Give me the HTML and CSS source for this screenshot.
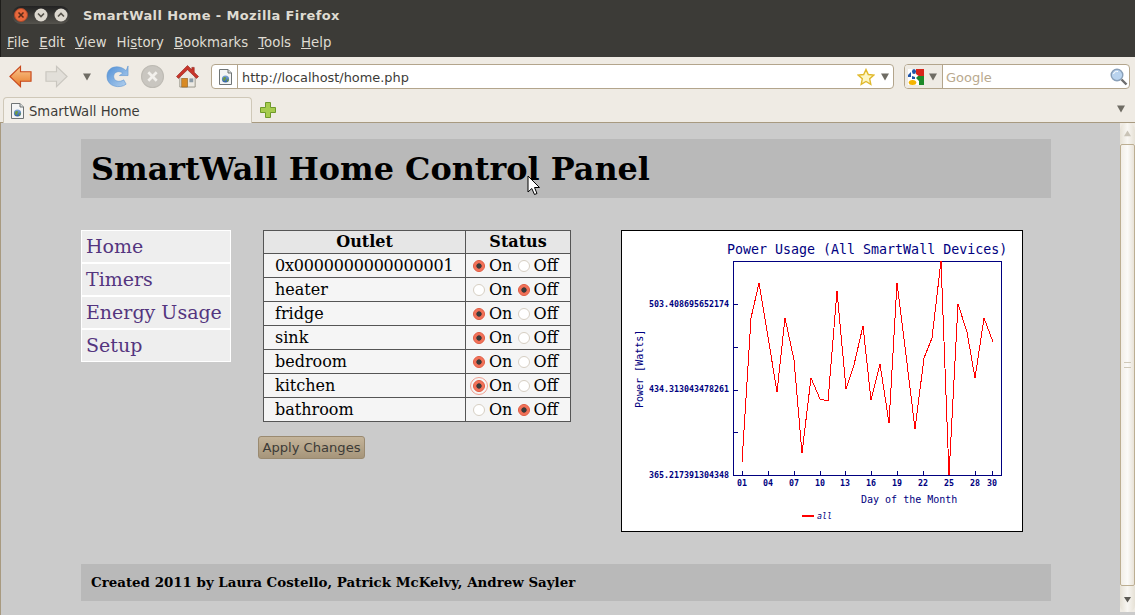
FILE: index.html
```html
<!DOCTYPE html>
<html lang="en">
<head>
<meta charset="utf-8">
<title>SmartWall Home</title>
<link rel="stylesheet" href="styles.css">
</head>
<body>
<svg width="0" height="0" class="defs">
  <defs>
    <linearGradient id="globe" x1="0" y1="0" x2="0" y2="1"><stop offset="0" stop-color="#7fa8d8"/><stop offset="1" stop-color="#2f5f9c"/></linearGradient>
    <symbol id="page" viewBox="0 0 14 16">
      <path d="M1.5.5H10L13.5 4V15.5H1.5Z" fill="#f4f5f5" stroke="#6f7475"/>
      <path d="M10 .5V4H13.5" fill="#d8dcdc" stroke="#6f7475"/>
      <circle cx="7.5" cy="10" r="3.6" fill="url(#globe)"/>
      <path d="M5.2 9C6 7.600 8 8 8 9S6.500 10.500 7 12C5.500 12 4.700 10.500 5.200 9ZM9 11L10.800 10C10.800 11.300 10 12.700 9 12.700Z" fill="#6f9a3c"/>
    </symbol>
    <symbol id="tri" viewBox="0 0 8 8"><path d="M0 .5H8L4 7.5Z" fill="#6f6c64"/></symbol>
  </defs>
</svg>

<div class="titlebar">
  <div class="winbtns">
    <svg class="winbtn" viewBox="0 0 14 14"><circle cx="7" cy="7" r="6.5" fill="#e8683c" stroke="#a8482a"/><path d="M4.5 4.5L9.5 9.5M9.5 4.5L4.5 9.5" stroke="#5a2a18" stroke-width="1.5"/></svg>
    <svg class="winbtn" viewBox="0 0 14 14"><circle cx="7" cy="7" r="6.5" fill="#dcd8cf"/><path d="M4 5.5L7 8.5L10 5.5" fill="none" stroke="#55524a" stroke-width="1.6"/></svg>
    <svg class="winbtn" viewBox="0 0 14 14"><circle cx="7" cy="7" r="6.5" fill="#dcd8cf"/><path d="M4 8.5L7 5.5L10 8.5" fill="none" stroke="#55524a" stroke-width="1.6"/></svg>
  </div>
  <span class="wintitle">SmartWall Home - Mozilla Firefox</span>
</div>

<div class="menubar">
  <span class="mi"><u>F</u>ile</span>
  <span class="mi"><u>E</u>dit</span>
  <span class="mi"><u>V</u>iew</span>
  <span class="mi">Hi<u>s</u>tory</span>
  <span class="mi"><u>B</u>ookmarks</span>
  <span class="mi"><u>T</u>ools</span>
  <span class="mi"><u>H</u>elp</span>
</div>

<div class="toolbar">
  <svg class="tb tb-back" viewBox="0 0 24 24"><defs><linearGradient id="org" x1="0" y1="0" x2="0" y2="1"><stop offset="0" stop-color="#f9c890"/><stop offset="1" stop-color="#e87a28"/></linearGradient></defs><path d="M1 12L12 1.5V7H23V17H12V22.5Z" fill="url(#org)" stroke="#c8481c" stroke-width="1.2"/></svg>
  <svg class="tb tb-fwd" viewBox="0 0 24 24"><path d="M23 12L12 1.5V7H1V17H12V22.5Z" fill="#e2dfd9" stroke="#c9c6bf" stroke-width="1.2"/></svg>
  <svg class="tri tb-tri"><use href="#tri"/></svg>
  <svg class="tb tb-reload" viewBox="0 0 24 24"><defs><linearGradient id="blu" x1="0" y1="0" x2="1" y2="1"><stop offset="0" stop-color="#4f8fd6"/><stop offset="1" stop-color="#b6d2ee"/></linearGradient></defs><path d="M21 6L23 1V11H14L17.5 8.5C14 5.5 8 7 8 12S14 18.5 18.5 15.5L21 20C15 25 1 23 1 12S14 -1 21 6Z" fill="url(#blu)" stroke="#5a92d0" stroke-width=".6"/></svg>
  <svg class="tb tb-stop" viewBox="0 0 22 22"><circle cx="11" cy="11" r="10.5" fill="#c9c6c0" stroke="#bdbab3"/><path d="M7 7L15 15M15 7L7 15" stroke="#f2f0ec" stroke-width="2.6"/></svg>
  <svg class="tb tb-home" viewBox="0 0 24 24"><path d="M4 11V23H20V11L12 4Z" fill="#ece9e2" stroke="#9a958a"/><path d="M12 .5L.5 12L2.5 14L12 5L21.5 14L23.5 12L19 7.5V2.5H16.5V5Z" fill="#c8352a" stroke="#8f2018" stroke-width=".6"/><rect x="6" y="14" width="6" height="9" fill="#d88a24" stroke="#8a5a18" stroke-width=".6"/><rect x="14" y="14" width="4" height="4" fill="#8a9aa6"/></svg>

  <div class="urlbar">
    <svg class="fav"><use href="#page"/></svg>
    <span class="sep"></span>
    <span class="url">http://localhost/home.php</span>
    <svg class="star" viewBox="0 0 18 18"><path d="M9 1.5L11.3 6.5L16.8 7.1L12.7 10.8L13.8 16.3L9 13.5L4.2 16.3L5.3 10.8L1.2 7.1L6.7 6.5Z" fill="#fdf6c4" stroke="#e0b92c" stroke-width="1.4"/></svg>
    <svg class="tri url-tri"><use href="#tri"/></svg>
  </div>

  <div class="searchbar">
    <div class="engine">
      <svg class="glogo" viewBox="0 0 16 16"><rect width="16" height="16" fill="#fff"/><path d="M8 0H16V8H12L8 5Z" fill="#d8261c"/><path d="M10 7H16V16H11V12L8 9Z" fill="#1d8a2a"/><ellipse cx="4.5" cy="13.5" rx="3.8" ry="2.5" fill="#f4b400"/><path d="M0 6L3 3V8H0Z" fill="#1f55a8"/><ellipse cx="6" cy="2.5" rx="2" ry="2.5" fill="#1f55a8"/><path d="M4 7L7 8V10H4Z" fill="#1f55a8"/></svg>
      <svg class="tri"><use href="#tri"/></svg>
    </div>
    <span class="sep sep-search"></span>
    <span class="google">Google</span>
    <svg class="mag" viewBox="0 0 18 18"><circle cx="7" cy="7" r="5.8" fill="#b9d3ee" stroke="#8aa0b8" stroke-width="1.4"/><path d="M3.5 6C4 4 6 3 8 3.5" fill="none" stroke="#fff"/><path d="M11.5 11.5L16.5 16.5" stroke="#6d6d6d" stroke-width="2.4"/></svg>
  </div>
</div>

<div class="tabbar">
  <div class="tab">
    <svg class="fav"><use href="#page"/></svg>
    <span>SmartWall Home</span>
  </div>
  <svg class="plus" viewBox="0 0 16 16"><path d="M5.5 .5H10.5V5.5H15.5V10.5H10.5V15.5H5.5V10.5H.5V5.5H5.5Z" fill="#a6cc4e" stroke="#6f9a2a"/></svg>
  <svg class="tri tab-tri"><use href="#tri"/></svg>
</div>

<div class="viewport">
  <main class="page">
    <header class="banner"><h1>SmartWall Home Control Panel</h1></header>

    <div class="columns">
      <nav class="nav">
        <a class="nav-link">Home</a>
        <a class="nav-link">Timers</a>
        <a class="nav-link">Energy Usage</a>
        <a class="nav-link">Setup</a>
      </nav>

      <form class="panel">
        <table class="outlets">
          <thead><tr><th class="c-name">Outlet</th><th class="c-stat">Status</th></tr></thead>
          <tbody>
            <tr><td class="name addr">0x0000000000000001</td><td class="stat"><input type="radio" name="a" checked>On <input type="radio" name="a">Off</td></tr>
            <tr><td class="name">heater</td><td class="stat"><input type="radio" name="b">On <input type="radio" name="b" checked>Off</td></tr>
            <tr><td class="name">fridge</td><td class="stat"><input type="radio" name="c" checked>On <input type="radio" name="c">Off</td></tr>
            <tr><td class="name">sink</td><td class="stat"><input type="radio" name="d" checked>On <input type="radio" name="d">Off</td></tr>
            <tr><td class="name">bedroom</td><td class="stat"><input type="radio" name="e" checked>On <input type="radio" name="e">Off</td></tr>
            <tr><td class="name">kitchen</td><td class="stat"><input class="focused" type="radio" name="f" checked>On <input type="radio" name="f">Off</td></tr>
            <tr><td class="name">bathroom</td><td class="stat"><input type="radio" name="g">On <input type="radio" name="g" checked>Off</td></tr>
          </tbody>
        </table>
        <button type="button" class="apply">Apply Changes</button>
      </form>

      <figure class="chart">
        <svg class="chart-svg" width="402" height="302" viewBox="621 230 402 302">
          <rect x="621.5" y="230.5" width="401" height="301" fill="#fff" stroke="#000"/>
          <text class="c-title" x="727" y="254">Power Usage (All SmartWall Devices)</text>
          <g class="axis">
            <rect x="733.5" y="261.5" width="268" height="214" fill="none"/>
            <path d="M733 304H738M733 347H738M733 390H738M733 432H738M733 475H738M742 475V471M768 475V471M794 475V471M820 475V471M845 475V471M871 475V471M897 475V471M923 475V471M949 475V471M975 475V471M992 475V471"/>
          </g>
          <g class="c-small">
            <text x="649" y="307">503.408695652174</text>
            <text x="649" y="392">434.313043478261</text>
            <text x="649" y="478">365.217391304348</text>
            <text x="737" y="486">01</text><text x="763" y="486">04</text><text x="789" y="486">07</text><text x="815" y="486">10</text><text x="840" y="486">13</text><text x="866" y="486">16</text><text x="892" y="486">19</text><text x="918" y="486">22</text><text x="944" y="486">25</text><text x="970" y="486">28</text><text x="987" y="486">30</text>
          </g>
          <text class="c-label" x="861" y="503">Day of the Month</text>
          <text class="c-label" transform="translate(643 408) rotate(-90)">Power [Watts]</text>
          <polyline class="series" points="742,462 751,318 759,283 768,337 777,392 785,318 794,360 802,453 811,378 820,399 828,401 837,291 846,389 854,365 863,326 871,400 880,364 889,423 897,283 906,355 915,429 924,358 932,338 941,261 949,475 958,304 967,332 975,378 984,318 993,342"/>
          <path class="legend-line" d="M802 516H814"/>
          <text class="c-legend" x="817" y="519">all</text>
        </svg>
      </figure>
    </div>

    <footer class="footer">Created 2011 by Laura Costello, Patrick McKelvy, Andrew Sayler</footer>
  </main>

  <div class="scrollbar">
    <div class="sb-btn sb-top"><svg class="sb-tri" viewBox="0 0 8 8"><path d="M0 7H8L4 .5Z" fill="#c9c3b6"/></svg></div>
    <div class="sb-thumb"><span class="grip"></span></div>
    <div class="sb-btn sb-bot"><svg class="sb-tri" viewBox="0 0 8 8"><path d="M0 1H8L4 7.5Z" fill="#5c5a54"/></svg></div>
  </div>

  <svg class="cursor" width="14" height="21" viewBox="0 0 14 21"><path d="M1 1V17L4.8 13.5L7.5 19.5L10 18.5L7.5 12.5H12.5Z" fill="#fff" stroke="#000"/></svg>
</div>
</body>
</html>
```
FILE: styles.css
```css
* { box-sizing: border-box; }
html, body { margin: 0; height: 615px; overflow: hidden; }
body { display: flex; flex-direction: column; width: 1135px; background: #efebe4; font-family: "DejaVu Sans", sans-serif; }
.defs { position: absolute; }

.titlebar { height: 28px; background: #3c3b37; display: flex; align-items: center; padding-left: 11px; flex: none; border-left: 1px solid #1e1d1a; }
.winbtns { width: 58px; height: 18px; margin-top: 2px; border-radius: 9px; background: linear-gradient(#222, #55534d); display: flex; align-items: center; justify-content: space-between; padding: 0 2px; }
.winbtn { width: 14px; height: 14px; }
.wintitle { margin-left: 13px; margin-top: 2px; color: #dfdbd2; font-weight: bold; font-size: 13px; letter-spacing: .38px; white-space: nowrap; }

.menubar { height: 29px; padding-bottom: 1px; background: #3c3b37; color: #dfdbd2; display: flex; align-items: center; font-size: 13.3px; padding-left: 6px; gap: 10px; flex: none; border-left: 1px solid #1e1d1a; }
.mi { white-space: nowrap; }

.toolbar { height: 39px; background: #efebe4; display: flex; align-items: center; padding-left: 9px; flex: none; }
.tb { height: 23px; width: 23px; flex: none; }
.tb-fwd { margin-left: 13px; }
.tri { width: 8px; height: 8px; flex: none; }
.tb-tri { margin-left: 15px; }
.tb-reload { margin-left: 15px; }
.tb-stop { margin-left: 12px; }
.tb-home { margin-left: 12px; }

.urlbar, .searchbar { height: 25px; background: #fff; border: 1px solid #b3a58c; border-radius: 4px; display: flex; align-items: center; flex: none; }
.urlbar { width: 683px; margin-left: 12px; padding-left: 6px; }
.searchbar { width: 226px; margin-left: 10px; overflow: hidden; }
.fav { width: 14px; height: 16px; flex: none; }
.sep { width: 1px; height: 23px; background: #b3a58c; margin-left: 5px; flex: none; }
.sep-search { margin-left: 0; }
.url { margin: 1px 0 0 4px; font-size: 12.9px; color: #3c3b37; }
.star { width: 18px; height: 18px; margin-left: auto; }
.url-tri { margin: 0 4px 0 6px; }
.engine { width: 37px; height: 23px; background: #efebe4; display: flex; align-items: center; padding-left: 3px; gap: 5px; }
.glogo { width: 16px; height: 16px; flex: none; }
.google { margin: 1px 0 0 3px; font-size: 13px; color: #b9a98e; }
.mag { width: 18px; height: 18px; margin-left: auto; margin-right: 1px; }

.tabbar { height: 27px; background: #efebe4; border-bottom: 1px solid #a89a80; display: flex; align-items: flex-end; padding-left: 3px; flex: none; }
.tab { width: 249px; height: 26px; margin-bottom: -1px; padding-top: 1px; background: #f3f0ea; border: 1px solid #cfc8b8; border-bottom: none; border-radius: 4px 4px 0 0; display: flex; align-items: center; padding-left: 6px; gap: 5px; font-size: 13.2px; color: #3c3b37; }
.plus { width: 16px; height: 16px; margin: 0 0 4px 8px; flex: none; }
.tab-tri { margin: 0 10px 9px auto; }

.viewport { flex: 1; display: flex; position: relative; background: #cbcbcb; min-height: 0; }
.page { flex: 1; padding: 16px 0 0 80px; font-family: "DejaVu Serif", serif; min-width: 0; border-left: 1px solid #a89a80; }

.banner { width: 970px; height: 59px; background: #b9b9b9; display: flex; align-items: center; padding-left: 10px; }
h1 { margin: 0; font-size: 31.85px; font-weight: bold; color: #000; white-space: nowrap; }

.columns { display: flex; margin-top: 32px; align-items: flex-start; }
.nav { width: 150px; display: flex; flex-direction: column; gap: 2px; background: #fff; border: 1px solid #fff; flex: none; }
.nav-link { display: block; height: 31px; line-height: 30px; padding-left: 4px; background: #eee; color: #54357f; font-size: 19px; white-space: nowrap; }

.panel { margin-left: 27px; width: 340px; flex: none; }
.outlets { border-collapse: collapse; margin-left: 5px; font-size: 16px; color: #000; }
.outlets th, .outlets td { border: 1px solid #555; padding: 0; height: 24px; line-height: 20px; }
.outlets th { background: #e6e6e6; font-weight: bold; text-align: center; font-size: 16px; height: 23px; }
.c-name { width: 202px; }
.c-stat { width: 105px; }
.outlets td { background: #f5f5f5; }
.name { padding-left: 11px !important; }
.addr { letter-spacing: -.2px; }
.stat { padding-left: 7px !important; white-space: nowrap; }

input[type=radio] { appearance: none; -webkit-appearance: none; width: 12px; height: 12px; margin: 0 4px 0 0; border-radius: 50%; border: 1px solid #d6cfc3; background: #fff; vertical-align: -1px; }
input[type=radio]:checked { border-color: #e05a40; background: radial-gradient(circle, #3a3a3a 0 2.3px, #f26a50 3px, #f58872 100%); }
input.focused { outline: 1px solid #f0a090; outline-offset: 2px; }

.apply { display: block; margin-top: 14px; width: 107px; height: 23px; padding: 0; border: 1px solid #9a8a70; border-radius: 3px; background: linear-gradient(#c4b49a, #a6957a); color: #3c3b37; font: 13.1px "DejaVu Sans", sans-serif; }

.chart { margin: 0 0 0 23px; width: 402px; height: 302px; flex: none; }
.chart-svg { display: block; }
.c-title { font: 13.3px "DejaVu Sans Mono", monospace; fill: #000080; }
.c-small { font: bold 8.3px "DejaVu Sans Mono", monospace; fill: #000080; }
.c-label { font: 10px "DejaVu Sans Mono", monospace; fill: #000080; }
.c-legend { font: italic 8.3px "DejaVu Sans Mono", monospace; fill: #000080; }
.axis rect, .axis path { stroke: #000080; stroke-width: 1; shape-rendering: crispEdges; fill: none; }
.series { fill: none; stroke: #f00; stroke-width: 1; shape-rendering: crispEdges; }
.legend-line { stroke: #f00; stroke-width: 2; shape-rendering: crispEdges; }

.footer { width: 970px; height: 37px; margin-top: 32px; padding-bottom: 2px; background: #b9b9b9; display: flex; align-items: center; padding-left: 10px; font-size: 13.4px; font-weight: bold; color: #000; white-space: nowrap; }

.scrollbar { width: 15px; flex: none; display: flex; flex-direction: column; background: #efebe4; margin-bottom: 3px; }
.sb-btn { height: 21px; background: linear-gradient(90deg, #e6e1d6, #f8f6f2 50%, #e6e1d6); display: flex; align-items: center; justify-content: center; flex: none; }
.sb-top { border-radius: 7px 7px 0 0; }
.sb-bot { height: 26px; border-radius: 0 0 7px 7px; }
.sb-tri { width: 7px; height: 7px; }
.sb-thumb { flex: 1; background: linear-gradient(90deg, #f2eee7, #fbfaf8 50%, #e9e3d8); border: 1px solid #bcae92; border-radius: 2px; display: flex; align-items: center; justify-content: center; }
.grip { width: 7px; height: 6px; border-top: 1px solid #cfc8b8; border-bottom: 1px solid #cfc8b8; }
.cursor { position: absolute; left: 527px; top: 52px; }
```
